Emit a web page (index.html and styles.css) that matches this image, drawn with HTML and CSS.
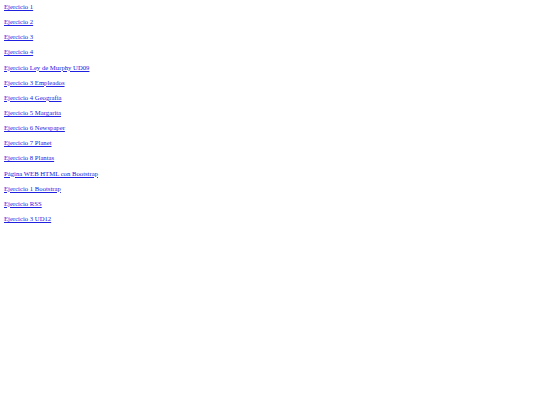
FILE: index.html
```html
<!DOCTYPE html>
<html>
<head>
<meta charset="utf-8">
<link rel="stylesheet" href="styles.css">
</head>
<body>
<ul class="list">
<li><a href="#">Ejercicio 1</a></li>
<li><a href="#">Ejercicio 2</a></li>
<li><a href="#">Ejercicio 3</a></li>
<li><a href="#">Ejercicio 4</a></li>
<li><a href="#">Ejercicio Ley de Murphy UD09</a></li>
<li><a href="#">Ejercicio 3 Empleados</a></li>
<li><a href="#">Ejercicio 4 Geografia</a></li>
<li><a href="#">Ejercicio 5 Margarita</a></li>
<li><a href="#">Ejercicio 6 Newspaper</a></li>
<li><a href="#">Ejercicio 7 Planet</a></li>
<li><a href="#">Ejercicio 8 Plantas</a></li>
<li><a href="#">Página WEB HTML con Bootstrap</a></li>
<li><a href="#">Ejercicio 1 Bootstrap</a></li>
<li><a href="#">Ejercicio RSS</a></li>
<li><a href="#">Ejercicio 3 UD12</a></li>
</ul>
</body>
</html>
```
FILE: styles.css
```css
html, body {
  margin: 0;
  padding: 0;
  background: #fff;
}
.list {
  list-style: none;
  margin: -1px 0 0 0;
  padding: 0 0 0 4px;
  font-family: "Liberation Serif", serif;
  font-size: 6.7px;
  line-height: 15.14px;
}
.list a {
  color: #2020e0;
  text-decoration: underline;
  text-decoration-color: #2020e0;
}
```
